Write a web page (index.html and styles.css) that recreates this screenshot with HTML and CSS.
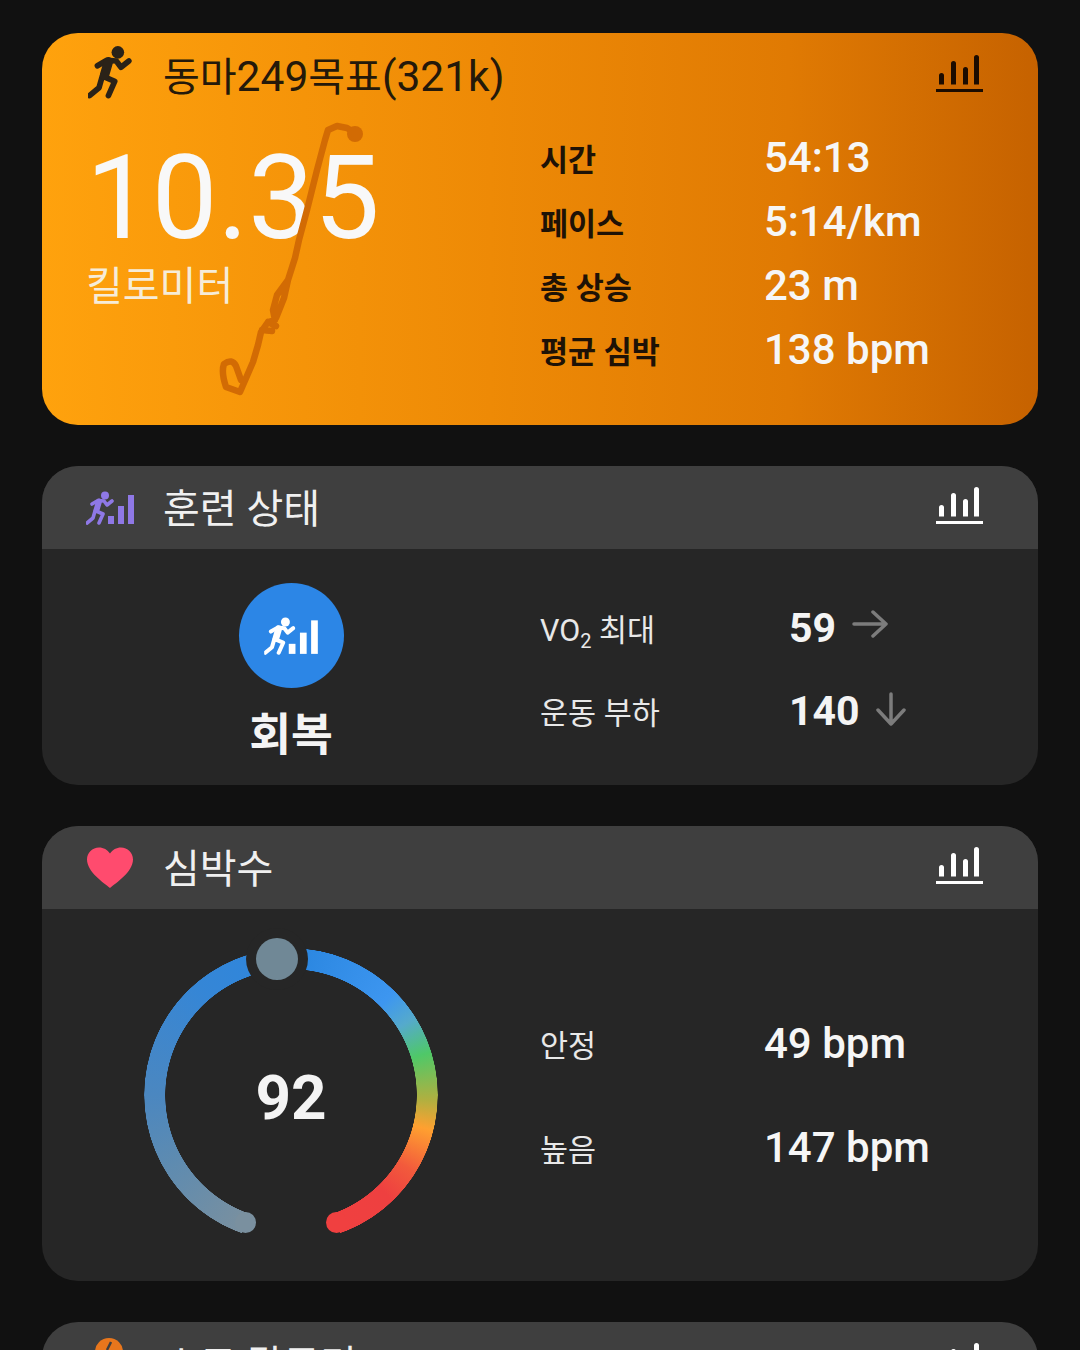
FILE: index.html
```html
<!DOCTYPE html>
<html lang="ko">
<head>
    <meta charset="UTF-8">
    <meta name="viewport" content="width=device-width, initial-scale=1.0">
    <title>활동 요약</title>
    <link rel="stylesheet" href="styles.css">
</head>
<body>

    <svg class="defs" width="0" height="0">
        <symbol id="chart" viewBox="0 0 47 38">
            <path d="M3 29.500v-9a2.500 2.500 0 0 1 5 0v9zM15 29.500v-21a2.500 2.500 0 0 1 5 0v21zM27 29.500v-15a2.500 2.500 0 0 1 5 0v15zM38 29.500v-27a2.500 2.500 0 0 1 5 0v27z"/>
            <rect x="0" y="34" width="47" height="3"/>
        </symbol>
        <symbol id="runner" viewBox="0 0 28 34">
            <circle cx="19" cy="4.500" r="4"/>
            <path class="limbs" d="M6 13 L12 9.500 L18 10 L21 14 L26 10 M10 20 L17 23 L13 32 M9 20 L7 27 L1 32"/>
            <path class="torso" d="M13 10.500 L10.500 19"/>
        </symbol>
    </svg>

    <!-- activity -->
    <section class="card card-activity">
        <div class="card-head">
            <div class="head-icon">
                <svg class="run-icon" width="44" height="54"><use href="#runner"/></svg>
            </div>
            <h2>동마<span class="latin">249</span>목표<span class="latin">(321k)</span></h2>
            <svg class="chart-icon"><use href="#chart"/></svg>
        </div>
        <div class="card-body activity-body">
            <div class="distance">
                <div class="distance-num">10.35</div>
                <div class="distance-unit">킬로미터</div>
            </div>
            <div class="stats">
                <div class="stat-row"><span class="stat-label">시간</span><span class="stat-value">54:13</span></div>
                <div class="stat-row"><span class="stat-label">페이스</span><span class="stat-value">5:14/km</span></div>
                <div class="stat-row"><span class="stat-label">총 상승</span><span class="stat-value">23 m</span></div>
                <div class="stat-row"><span class="stat-label">평균 심박</span><span class="stat-value">138 bpm</span></div>
            </div>
        </div>
        <svg class="route" viewBox="200 110 170 300" width="170" height="300">
            <path d="M355 133 L347 128 L337 126 L328 130 L325 140 L317 170 L307 210 L299 240 L295 258 L288 280 L277 295 L273 310 L275 320 L268 322 L261 332 L258 345 L253 362 L240 392 L226 387 Q221 372 224 364 Q232 358 236 366 L241 380 M288 280 L284 298 L276 318 M268 322 L276 326 M262 330 L272 331"/>
            <circle cx="355" cy="134" r="8"/>
        </svg>
    </section>

    <!-- training status -->
    <section class="card">
        <div class="card-head">
            <div class="head-icon">
                <svg class="status-icon purple" width="48" height="34" viewBox="0 0 48 34">
                    <use href="#runner" width="28" height="34"/>
                    <rect x="22" y="25" width="6" height="8"/>
                    <rect x="32" y="15" width="6" height="18"/>
                    <rect x="42" y="4" width="6" height="29"/>
                </svg>
            </div>
            <h2>훈련 상태</h2>
            <svg class="chart-icon"><use href="#chart"/></svg>
        </div>
        <div class="card-body status-body">
            <div class="status-left">
                <div class="status-badge">
                    <svg class="status-icon white" width="54" height="38" viewBox="0 0 48 34">
                        <use href="#runner" width="28" height="34"/>
                        <rect x="22" y="24" width="6" height="9"/>
                        <rect x="32" y="14" width="6" height="19"/>
                        <rect x="42" y="3" width="6" height="30"/>
                    </svg>
                </div>
                <div class="status-name">회복</div>
            </div>
            <div class="status-rows">
                <div class="status-row">
                    <span class="plain-label">VO<sub>2</sub> 최대</span>
                    <span class="status-value">59</span>
                    <svg class="trend trend-right" width="36" height="28" viewBox="0 0 36 28"><path d="M2 14H34M21 2l13 12-13 12"/></svg>
                </div>
                <div class="status-row">
                    <span class="plain-label">운동 부하</span>
                    <span class="status-value">140</span>
                    <svg class="trend trend-down" width="30" height="34" viewBox="0 0 30 34"><path d="M15 2V32M2 18l13 14 13-14"/></svg>
                </div>
            </div>
        </div>
    </section>

    <!-- heart rate -->
    <section class="card">
        <div class="card-head">
            <div class="head-icon">
                <svg width="48" height="42" viewBox="0 0 48 42"><path class="heart" d="M24 41C18 36 1 25 1 12.500 1 5.500 6.500 0.500 13 0.500 17.500 0.500 21.500 2.800 24 6.500 26.500 2.800 30.500 0.500 35 0.500 41.500 0.500 47 5.500 47 12.500 47 25 30 36 24 41Z"/></svg>
            </div>
            <h2>심박수</h2>
            <svg class="chart-icon"><use href="#chart"/></svg>
        </div>
        <div class="card-body heart-body">
            <div class="gauge-col">
                <div class="gauge">
                    <div class="gauge-ring"></div>
                    <span class="cap cap-left"></span>
                    <span class="cap cap-right"></span>
                    <span class="knob"></span>
                    <div class="gauge-num">92</div>
                </div>
            </div>
            <div class="heart-rows">
                <div class="stat-row heart-row"><span class="plain-label">안정</span><span class="stat-value">49 bpm</span></div>
                <div class="stat-row heart-row"><span class="plain-label">높음</span><span class="stat-value">147 bpm</span></div>
            </div>
        </div>
    </section>

    <!-- calories, cut off by the window -->
    <section class="card">
        <div class="card-head">
            <div class="head-icon">
                <svg width="48" height="54" viewBox="0 0 48 54">
                    <circle class="flame" cx="23" cy="15" r="14"/>
                    <path class="flame-mark" d="M25 5 L21 13"/>
                </svg>
            </div>
            <h2>소모 칼로리</h2>
            <svg class="chart-icon"><use href="#chart"/></svg>
        </div>
    </section>

</body>
</html>
```

FILE: styles.css
```css
html, body {
    height: 1350px;
    overflow: hidden;
}

body {
    margin: 0;
    padding: 33px 42px 0;
    box-sizing: border-box;
    background-color: #111111;
    color: #f4f4f4;
    font-family: Roboto, "Noto Sans CJK KR", sans-serif;
    display: flex;
    flex-direction: column;
    gap: 41px;
}

.defs {
    position: absolute;
}

.card {
    position: relative;
    flex-shrink: 0;
    border-radius: 36px;
    background-color: #262626;
    overflow: hidden;
}

.card-head {
    display: flex;
    align-items: center;
    height: 83px;
    padding: 0 55px 0 44px;
    background-color: #3f3f3f;
}

.head-icon {
    width: 77px;
    display: flex;
    align-items: center;
}

.card-head h2 {
    flex: 1;
    margin: 4px 0 0;
    font-size: 40px;
    font-weight: 400;
    line-height: 50px;
    color: #f0f0f0;
}

.latin {
    font-size: 42.500px;
}

.chart-icon {
    width: 47px;
    height: 38px;
    margin-bottom: 4px;
    fill: #ffffff;
}

.limbs {
    fill: none;
    stroke: currentColor;
    stroke-width: 3.600;
    stroke-linecap: round;
    stroke-linejoin: round;
}

.torso {
    fill: none;
    stroke: currentColor;
    stroke-width: 6;
    stroke-linecap: round;
}

.status-icon {
    fill: currentColor;
}

.purple {
    color: #8f78e6;
}

.white {
    color: #ffffff;
}

.heart {
    fill: #ff4b6e;
}

.flame {
    fill: #e8761c;
}

.flame-mark {
    fill: none;
    stroke: #3f3f3f;
    stroke-width: 2.500;
}

/* activity card */

.card-activity {
    height: 392px;
    background: linear-gradient(90deg, #ffa20d 0%, #ee8a06 45%, #e07a03 75%, #c66200 100%);
}

.card-activity .card-head {
    height: 88px;
    background: none;
}

.card-activity h2 {
    margin-top: 0;
    color: #24190a;
}

.card-activity .chart-icon {
    margin-bottom: 6px;
    fill: #1c0c00;
}

.run-icon {
    fill: #2a2218;
    color: #2a2218;
    margin: -10px 0 0 2px;
}

.activity-body {
    display: grid;
    grid-template-columns: 498px 1fr;
}

.distance {
    padding: 12px 0 0 44px;
}

.distance-num {
    font-size: 117px;
    line-height: 130px;
    color: #f8f8f8;
}

.distance-unit {
    font-size: 40px;
    line-height: 50px;
    margin-top: -1px;
    color: #f6ecd8;
}

.stats {
    padding-top: 6px;
}

.stat-row {
    display: grid;
    grid-template-columns: 224px auto;
    align-items: center;
    height: 64px;
}

.stat-label {
    font-size: 30.500px;
    font-weight: 700;
    padding-bottom: 2px;
    color: #1e1206;
}

.stat-value {
    font-size: 42px;
    font-weight: 500;
    padding-bottom: 4px;
    color: #f6f6f6;
}

.route {
    position: absolute;
    left: 158px;
    top: 77px;
}

.route path {
    fill: none;
    stroke: #d26b04;
    stroke-width: 6.500;
    stroke-linejoin: round;
    stroke-linecap: round;
}

.route circle {
    fill: #d26b04;
}

/* training status card */

.status-body {
    display: grid;
    grid-template-columns: 498px 1fr;
    height: 236px;
}

.status-left {
    display: flex;
    flex-direction: column;
    align-items: center;
    padding-top: 34px;
}

.status-badge {
    width: 105px;
    height: 105px;
    border-radius: 50%;
    background-color: #2c86e6;
    display: flex;
    align-items: center;
    justify-content: center;
}

.status-name {
    font-size: 45.500px;
    font-weight: 700;
    line-height: 56px;
    margin-top: 20px;
}

.status-rows {
    padding-top: 58px;
    display: flex;
    flex-direction: column;
    gap: 41px;
}

.status-row {
    display: flex;
    align-items: center;
    height: 42px;
}

.plain-label {
    font-size: 30.500px;
    color: #e8e8e8;
}

.status-row .plain-label {
    width: 249px;
}

.plain-label sub {
    font-size: 20px;
    line-height: 0;
}

.status-value {
    font-size: 41px;
    font-weight: 700;
    margin-right: 16px;
}

.trend {
    fill: none;
    stroke: #7c7c7c;
    stroke-width: 3.500;
    stroke-linecap: round;
    stroke-linejoin: round;
}

.trend-right {
    margin-bottom: 8px;
}

.trend-down {
    margin-bottom: 4px;
}

/* heart rate card */

.heart-body {
    display: grid;
    grid-template-columns: 498px 1fr;
    height: 372px;
}

.gauge-col {
    display: flex;
    justify-content: center;
    padding-top: 39px;
}

.gauge {
    position: relative;
    width: 294px;
    height: 294px;
}

.gauge-ring {
    width: 100%;
    height: 100%;
    border-radius: 50%;
    background: conic-gradient(
        transparent 0deg 2deg,
        #2a86e0 2deg,
        #3d96f0 45deg,
        #55aacc 58deg,
        #4fc868 73deg,
        #b0b040 92deg,
        #ffa030 104deg,
        #f25a3c 122deg,
        #ee4040 136deg,
        #f04040 160.500deg,
        transparent 160.500deg 199.500deg,
        #7a909f 199.500deg,
        #5e8bb0 240deg,
        #4b87c0 270deg,
        #3586d6 320deg,
        #2f86dc 350deg,
        transparent 350deg
    );
    -webkit-mask: radial-gradient(circle, transparent 125.500px, #000 126px, #000 146.500px, transparent 147px);
    mask: radial-gradient(circle, transparent 125.500px, #000 126px, #000 146.500px, transparent 147px);
}

.cap {
    position: absolute;
    width: 21px;
    height: 21px;
    border-radius: 50%;
}

.cap-left {
    left: 91px;
    top: 264px;
    background-color: #7a909f;
}

.cap-right {
    left: 182px;
    top: 264px;
    background-color: #f04040;
}

.knob {
    position: absolute;
    left: 112px;
    top: -10px;
    width: 42px;
    height: 42px;
    border-radius: 50%;
    background-color: #708896;
    box-shadow: 0 0 0 10px #262626;
}

.gauge-num {
    position: absolute;
    left: 0;
    right: 0;
    top: 111px;
    text-align: center;
    font-size: 62px;
    font-weight: 700;
    line-height: 78px;
}

.heart-rows {
    padding-top: 103px;
    display: flex;
    flex-direction: column;
    gap: 40px;
}

.heart-row {
    height: 64px;
}

.heart-row .stat-value {
    padding-bottom: 2px;
}
```
